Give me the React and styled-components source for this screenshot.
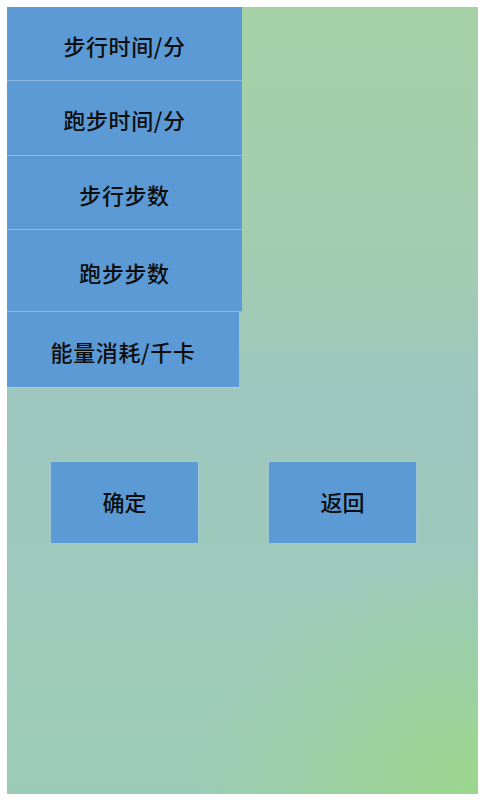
import React from 'react';
import styled, {createGlobalStyle} from 'styled-components';

const GlobalStyle = createGlobalStyle`
  html, body {
    margin: 0;
    padding: 0;
    background: #fff;
  }
  body {
    font-family: "Noto Sans CJK SC", "Noto Sans", sans-serif;
  }
`;

const Screen = styled.div`
  width: 480px;
  height: 800px;
  padding: 7px 2px 6px 7px;
  box-sizing: border-box;
  background: #fff;
`;

const Frame = styled.div`
  height: 100%;
  display: flex;
  flex-direction: column;
  background:
    radial-gradient(ellipse 60% 30% at 100% 100%, rgba(156, 216, 136, 0.9), rgba(156, 216, 136, 0) 100%),
    linear-gradient(180deg, #a6d1a7 0%, #a3cdb0 30%, #9dc6bf 50%, #9ec9bb 75%, #9bcbb6 100%);
`;

const Menu = styled.div`
  display: flex;
  flex-direction: column;
  align-items: flex-start;
`;

const MenuItem = styled.div`
  width: ${p => p.$width}px;
  height: ${p => p.$height}px;
  display: flex;
  align-items: center;
  justify-content: center;
  padding-top: 2px;
  box-sizing: border-box;
  background: #5b9ad5;
  border-bottom: 1px solid ${p => (p.$last ? '#a6cfe0' : '#8fbbe3')};
  color: #0d0d0d;
  font-size: 22px;
  font-weight: 500;
  letter-spacing: 0.6px;
`;

const ButtonRow = styled.div`
  display: flex;
  gap: 71px;
  margin-top: 74px;
  padding-left: 44px;
`;

const Button = styled.div`
  width: 147px;
  height: 81px;
  display: flex;
  align-items: center;
  justify-content: center;
  padding-bottom: 4px;
  box-sizing: border-box;
  background: #5b9ad5;
  box-shadow: 0 0 0 1px rgba(160, 200, 230, 0.6);
  color: #0d0d0d;
  font-size: 22px;
  font-weight: 500;
`;

const items = [
  {label: '步行时间/分', height: 74, width: 235},
  {label: '跑步时间/分', height: 75, width: 235},
  {label: '步行步数', height: 74, width: 235},
  {label: '跑步步数', height: 82, width: 235},
  {label: '能量消耗/千卡', height: 76, width: 232, last: true},
];

export default function App() {
  return (
    <Screen>
      <GlobalStyle/>
      <Frame>
        <Menu>
          {items.map(item => (
            <MenuItem key={item.label} $height={item.height} $width={item.width} $last={item.last}>
              {item.label}
            </MenuItem>
          ))}
        </Menu>
        <ButtonRow>
          <Button>确定</Button>
          <Button>返回</Button>
        </ButtonRow>
      </Frame>
    </Screen>
  );
}
